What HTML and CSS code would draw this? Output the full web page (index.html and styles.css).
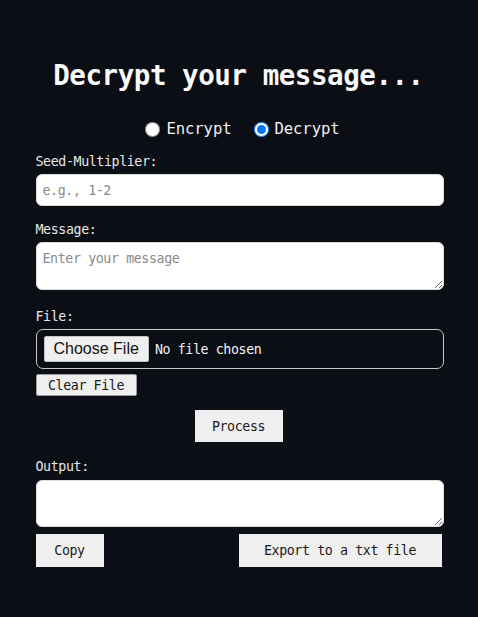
FILE: index.html
```html
<!DOCTYPE html>
<html lang="en">
<head>
<meta charset="utf-8">
<title>Decrypt your message</title>
<link rel="stylesheet" href="styles.css">
</head>
<body>
<main class="app">
  <h1 class="title">Decrypt your message...</h1>
  <div class="modes">
    <label class="mode"><input type="radio" name="mode" value="encrypt"><span>Encrypt</span></label>
    <label class="mode"><input type="radio" name="mode" value="decrypt" checked><span>Decrypt</span></label>
  </div>
  <label class="field-label label-seed" for="seed">Seed-Multiplier:</label>
  <input class="text-input" id="seed" type="text" placeholder="e.g., 1-2">
  <label class="field-label label-msg" for="msg">Message:</label>
  <textarea class="area area-msg" id="msg" placeholder="Enter your message"></textarea>
  <label class="field-label label-file" for="file">File:</label>
  <div class="file-box"><input class="file-input" id="file" type="file"></div>
  <button class="btn btn-clear" type="button">Clear File</button>
  <div class="process-row"><button class="btn btn-process" type="button">Process</button></div>
  <label class="field-label label-out" for="out">Output:</label>
  <textarea class="area area-out" id="out"></textarea>
  <div class="actions">
    <button class="btn btn-copy" type="button">Copy</button>
    <button class="btn btn-export" type="button">Export to a txt file</button>
  </div>
</main>
</body>
</html>
```
FILE: styles.css
```css
* { box-sizing: border-box; }
html, body { margin: 0; padding: 0; }
body {
  background: #0b0e15;
  color: #e8e8e8;
  font-family: "DejaVu Sans Mono", "Liberation Mono", monospace;
  font-size: 13.3px;
  letter-spacing: -0.4px;
  padding-left: 1px;
}
.app {
  width: 408px;
  margin: 0 auto;
  padding-top: 55px;
  display: flex;
  flex-direction: column;
}
.title {
  margin: 0;
  height: 40px;
  line-height: 40px;
  font-size: 27.5px;
  font-weight: bold;
  letter-spacing: -0.45px;
  color: #fafafa;
  text-align: center;
  padding-right: 2px;
}
.modes {
  margin-top: 22px;
  height: 24px;
  display: flex;
  justify-content: center;
  align-items: center;
  gap: 22px;
  padding-left: 6px;
}
.mode {
  display: flex;
  align-items: center;
  gap: 6px;
  font-size: 15.6px;
  letter-spacing: -0.1px;
  color: #f2f2f2;
}
.mode input {
  width: 15px;
  height: 15px;
  margin: 0;
}
.field-label {
  display: block;
  height: 20px;
  padding-top: 3px;
  line-height: 17px;
  color: #e6e6e6;
}
.label-seed { margin-top: 9px; }
.label-msg { margin-top: 12px; }
.label-file { margin-top: 15px; }
.label-out { margin-top: 13px; }
.text-input {
  margin-top: 4px;
  height: 32px;
  width: 100%;
  border: 1px solid #ddd;
  border-radius: 6px;
  background: #fff;
  padding: 0 6px;
  font: inherit;
  letter-spacing: -0.4px;
  color: #222;
}
.text-input::placeholder, .area::placeholder { color: #8a8a8a; }
.area {
  width: 100%;
  border: 1px solid #ddd;
  border-radius: 6px;
  background: #fff;
  padding: 8px 6px 6px;
  font: inherit;
  letter-spacing: -0.4px;
  color: #222;
  resize: vertical;
}
.area-msg { margin-top: 4px; height: 48px; }
.area-out { margin-top: 5px; height: 47px; }
.file-box {
  margin-top: 4px;
  height: 40px;
  border: 1px solid #c8c8c8;
  border-radius: 7px;
  display: flex;
  align-items: center;
  padding-left: 7px;
}
.file-input {
  font: inherit;
  color: #f2f2f2;
  letter-spacing: -0.4px;
}
.file-input::file-selector-button {
  font-family: "Liberation Sans", Arial, sans-serif;
  font-size: 16px;
  letter-spacing: 0;
  height: 26px;
  padding: 0 9px;
  margin-right: 6px;
  background: #efefef;
  color: #111;
  border: 1px solid #c4c4c4;
  border-radius: 2px;
}
.btn {
  font: inherit;
  letter-spacing: -0.4px;
  background: #efefef;
  color: #1a1a1a;
  border: 0;
  border-radius: 0;
  padding: 0;
}
.btn-clear {
  margin-top: 5px;
  align-self: flex-start;
  width: 101px;
  height: 22px;
  border: 1px solid #999;
  border-radius: 2px;
}
.process-row {
  margin-top: 14px;
  display: flex;
  justify-content: center;
  padding-right: 2px;
}
.btn-process { width: 88px; height: 32px; }
.actions {
  margin-top: 7px;
  display: flex;
  justify-content: space-between;
  padding-right: 2px;
}
.btn-copy { width: 68px; height: 33px; }
.btn-export { width: 203px; height: 33px; }
```
